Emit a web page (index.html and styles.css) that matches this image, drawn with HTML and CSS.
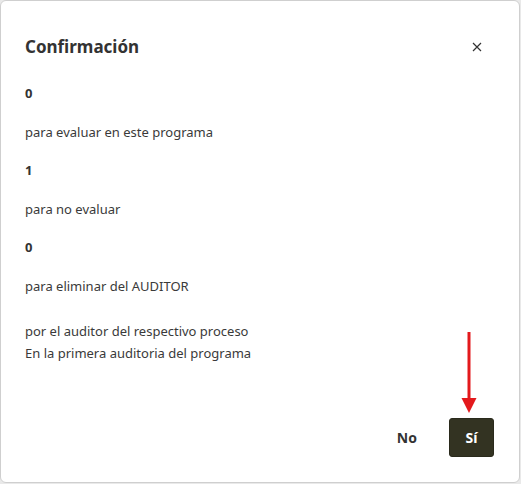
FILE: index.html
```html
<!DOCTYPE html>
<html lang="es">
<head>
    <meta charset="UTF-8">
    <meta name="viewport" content="width=device-width, initial-scale=1.0">
    <title>Confirmación</title>
    <link rel="stylesheet" href="styles.css">
</head>
<body>
    <div class="dialog">
        <div class="dialog-header">
            <h2>Confirmación</h2>
            <button class="close" aria-label="Cerrar">
                <svg width="10" height="10" viewBox="0 0 10 10">
                    <path d="M1 1 L9 9 M9 1 L1 9" stroke="#333" stroke-width="1.2" fill="none"/>
                </svg>
            </button>
        </div>

        <div class="dialog-body">
            <p class="num">0</p>
            <p>para evaluar en este programa</p>
            <p class="num">1</p>
            <p>para no evaluar</p>
            <p class="num">0</p>
            <p>para eliminar del AUDITOR</p>
            <p class="note">por el auditor del respectivo proceso<br>En la primera auditoria del programa</p>
        </div>

        <div class="dialog-footer">
            <button class="btn-text">No</button>
            <button class="btn-primary">Sí</button>
        </div>

        <!-- annotation arrow pointing at the confirm button -->
        <svg class="arrow" width="20" height="84" viewBox="0 0 20 84">
            <line x1="10" y1="0" x2="10" y2="70" stroke="#e3191c" stroke-width="3"/>
            <polygon points="2.5,66 17.5,66 10,81" fill="#e3191c"/>
        </svg>
    </div>
</body>
</html>
```

FILE: styles.css
```css
* {
    box-sizing: border-box;
}
body {
    margin: 0;
    background: #e9e9e9;
    font-family: "Noto Sans", "Open Sans", Arial, sans-serif;
    color: #333;
}
.dialog {
    position: relative;
    width: 520px;
    height: 483px;
    background: #fff;
    border: 1px solid #cfcfcf;
    border-radius: 6px;
    padding: 33px 25px 25px 24px;
    display: flex;
    flex-direction: column;
}
.dialog-header {
    display: flex;
    justify-content: space-between;
    align-items: center;
    height: 26px;
}
.dialog-header h2 {
    margin: 0;
    font-size: 17px;
    font-weight: 700;
    color: #333;
    line-height: 26px;
}
.close {
    background: none;
    border: none;
    padding: 0;
    margin-right: 12px;
    width: 10px;
    height: 10px;
    cursor: pointer;
    display: flex;
}
.dialog-body {
    margin-top: 22px;
    font-size: 13px;
    color: #3a3a3a;
}
.dialog-body p {
    margin: 0 0 16.5px;
    line-height: 22px;
}
.dialog-body .num {
    font-weight: 700;
    color: #333;
}
.dialog-body .note {
    margin-top: 23px;
}
.dialog-footer {
    margin-top: auto;
    display: flex;
    justify-content: flex-end;
    align-items: center;
    gap: 16px;
}
.dialog-footer button {
    font-family: inherit;
    font-size: 14px;
    font-weight: 700;
    border-radius: 3px;
    height: 39px;
    cursor: pointer;
}
.btn-text {
    background: none;
    border: none;
    color: #333;
    padding: 0 16px;
}
.btn-primary {
    background: #333322;
    border: 1px solid #2a2a1c;
    color: #fff;
    width: 45px;
    padding: 0;
}
.arrow {
    position: absolute;
    left: 458px;
    top: 331px;
}
```
